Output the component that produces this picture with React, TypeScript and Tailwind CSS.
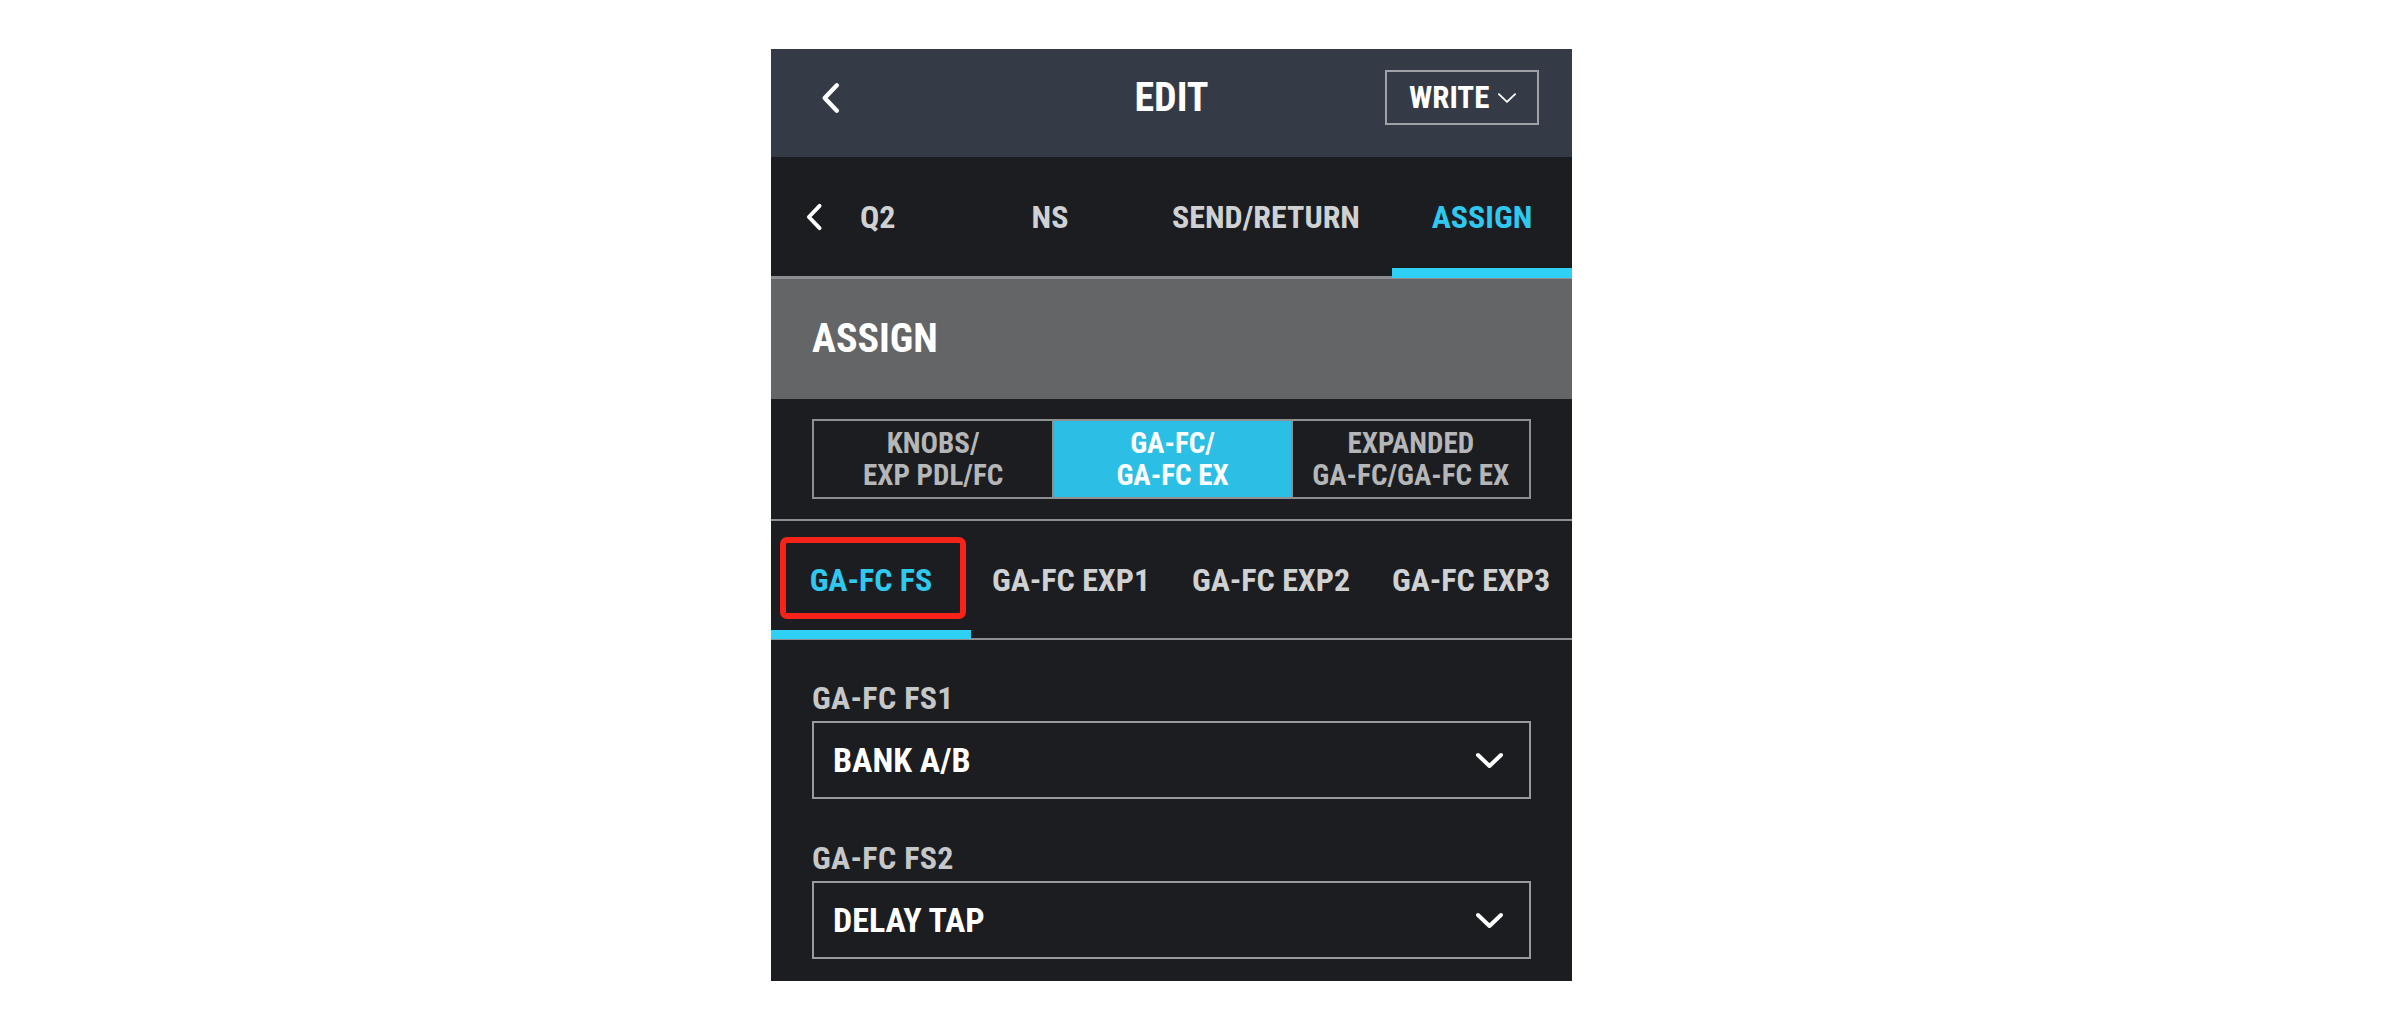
import React from "react";

const FONT = "font-['Roboto_Condensed','Roboto',sans-serif] font-bold font-stretch-[75%]";

const TOP_TABS = [
  { label: "NS", width: "w-[180px]" },
  { label: "SEND/RETURN", width: "w-[252px]" },
];

const SUB_TABS = ["GA-FC EXP1", "GA-FC EXP2", "GA-FC EXP3"];

const SEGMENTS = [
  { lines: ["KNOBS/", "EXP PDL/FC"], active: false },
  { lines: ["GA-FC/", "GA-FC EX"], active: true },
  { lines: ["EXPANDED", "GA-FC/GA-FC EX"], active: false },
];

function ChevronLeft({ className, width = 4.2 }: { className?: string; width?: number }) {
  return (
    <svg viewBox="0 0 18 30" className={className} fill="none">
      <polyline
        points="15,3 3.5,15 15,27"
        stroke="currentColor"
        strokeWidth={width}
        strokeLinecap="round"
        strokeLinejoin="round"
      />
    </svg>
  );
}

function ChevronDown({ className, width = 4 }: { className?: string; width?: number }) {
  return (
    <svg viewBox="0 0 29 17" className={className} fill="none">
      <polyline
        points="3,3 14.5,14 26,3"
        stroke="currentColor"
        strokeWidth={width}
        strokeLinecap="round"
        strokeLinejoin="round"
      />
    </svg>
  );
}

function Select({ label, value, className }: { label: string; value: string; className?: string }) {
  return (
    <div className={className}>
      <div className="text-[32px] leading-[36px] tracking-[0.01em] text-[#c6c7c9]">{label}</div>
      <div className="mt-[5px] flex h-[78px] items-center justify-between border-2 border-[#9a9b9d] pl-[19px] pr-[25px]">
        <span className="text-[34px] leading-none text-white">{value}</span>
        <ChevronDown className="h-[17px] w-[29px] text-white" />
      </div>
    </div>
  );
}

export default function App() {
  return (
    <div className={`min-h-screen bg-white pl-[771px] pt-[49px] ${FONT}`}>
      <div className="w-[801px] bg-[#1c1d21]">
        {/* Header */}
        <header className="grid h-[108px] grid-cols-[1fr_auto_1fr] items-center bg-[#343b46] pb-[11px]">
          <div className="pl-[50px]">
            <ChevronLeft className="h-[32px] w-[19px] text-white" />
          </div>
          <h1 className="text-[40px] leading-none text-white">EDIT</h1>
          <div className="flex justify-end pr-[33px]">
            <button className="flex h-[55px] w-[154px] shrink-0 items-center border-2 border-[#9ea1a6] pl-[22px] text-white">
              <span className="text-[31px] leading-none">WRITE</span>
              <ChevronDown className="ml-[6px] h-[12px] w-[24px] shrink-0" width={2.6} />
            </button>
          </div>
        </header>

        {/* Effect tabs */}
        <nav className="flex h-[122px] border-b-[3px] border-[#8d8e91] text-[32px] leading-none text-[#d0d1d3]">
          <div className="flex w-[189px] items-center pl-[34px]">
            <ChevronLeft className="h-[28px] w-[18px] text-white" />
            <span className="ml-[37px]">Q2</span>
          </div>
          {TOP_TABS.map((t) => (
            <div key={t.label} className={`flex items-center justify-center ${t.width}`}>
              {t.label}
            </div>
          ))}
          <div className="relative flex w-[180px] items-center justify-center text-[#2fc9ef]">
            ASSIGN
            <span className="absolute inset-x-0 bottom-[-2px] h-[10px] bg-[#2fd0f5]" />
          </div>
        </nav>

        {/* Section title */}
        <div className="flex h-[120px] items-center bg-[#646567] pl-[41px] text-[40px] leading-none text-white">
          ASSIGN
        </div>

        {/* Segmented control */}
        <div className="px-[41px] py-[20px]">
          <div className="grid h-[80px] w-[719px] grid-cols-3 border-2 border-[#8e8f91]">
            {SEGMENTS.map((s, i) => (
              <div
                key={i}
                className={`flex flex-col items-center justify-center text-[29px] leading-[32px] ${
                  i > 0 ? "border-l-2 border-[#8e8f91]" : ""
                } ${s.active ? "bg-[#2cbfe5] text-white" : "text-[#b5b6b8]"}`}
              >
                {s.lines.map((l) => (
                  <span key={l}>{l}</span>
                ))}
              </div>
            ))}
          </div>
        </div>

        {/* Sub tabs */}
        <div className="relative flex h-[121px] border-y-2 border-[#8e8f91] text-[32px] leading-none text-[#d0d1d3]">
          <div className="relative flex w-[200px] items-center justify-center text-[#2fc9ef]">
            GA-FC FS
            <span className="absolute inset-x-0 bottom-[-1px] h-[9px] bg-[#2fd0f5]" />
            <span className="absolute bottom-[19px] left-[9px] right-[5px] top-[16px] rounded-[7px] border-[6px] border-[#f5231a]" />
          </div>
          {SUB_TABS.map((t) => (
            <div key={t} className="flex w-[200px] items-center justify-center">
              {t}
            </div>
          ))}
        </div>

        {/* Assignments */}
        <div className="px-[41px] pb-[22px] pt-[40px]">
          <Select label="GA-FC FS1" value="BANK A/B" />
          <Select label="GA-FC FS2" value="DELAY TAP" className="mt-[41px]" />
        </div>
      </div>
    </div>
  );
}
